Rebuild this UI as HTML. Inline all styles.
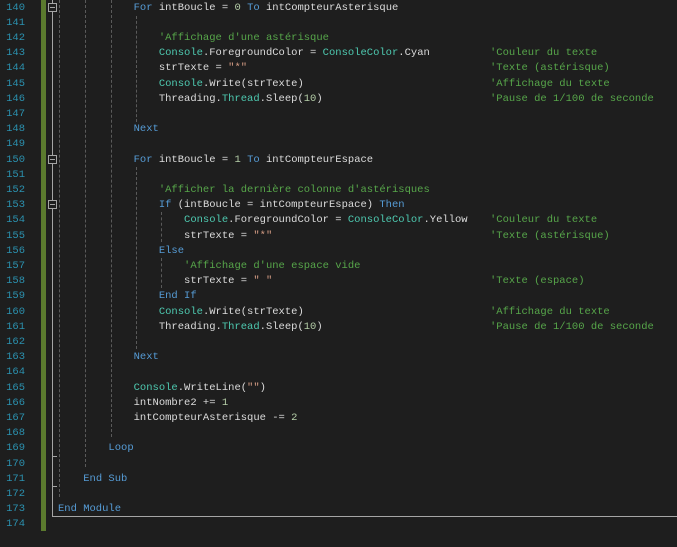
<!DOCTYPE html>
<html><head><meta charset="utf-8"><style>
html,body{margin:0;padding:0;background:#1e1e1e;width:677px;height:547px;overflow:hidden;position:relative}
.num,.code{position:absolute;top:0.5px;font-family:"Liberation Mono",monospace;font-size:10.5px;line-height:15.2px;white-space:pre;margin:0}
.num{left:0;width:25px;text-align:right;color:#2b91af}
.code{left:58px;color:#dcdcdc}
.k{color:#569cd6}.t{color:#4ec9b0}.c{color:#57a64a}.s{color:#d69d85}.n{color:#b5cea8}
.cm{position:absolute;left:432px}
.bar{position:absolute;left:41px;top:0;width:5px;height:531px;background:#5b7a2e}
.fl{position:absolute;left:52px;width:1px;background:#a5a5a5}
.box{position:absolute;left:48px;width:7px;height:7px;border:1px solid #a5a5a5;background:#1e1e1e}
.box:after{content:"";position:absolute;left:1px;top:3px;width:5px;height:1px;background:#a5a5a5}
.g{position:absolute;width:0;border-left:1px dashed #5a5a5a}
.tick{position:absolute;left:52px;width:5px;height:1px;background:#a5a5a5}
</style></head><body>
<div class="bar"></div>
<div class="fl" style="top:0;height:516px"></div>
<div style="position:absolute;left:52px;top:516px;width:625px;height:1px;background:#a5a5a5"></div>
<div class="tick" style="top:456px"></div>
<div class="tick" style="top:486px"></div>
<div class="box" style="top:3px"></div>
<div class="box" style="top:155px"></div>
<div class="box" style="top:200px"></div>
<div class="g" style="left:59px;top:0;height:497px"></div>
<div class="g" style="left:85px;top:0;height:467px"></div>
<div class="g" style="left:111px;top:0;height:437px"></div>
<div class="g" style="left:136px;top:16px;height:106px"></div>
<div class="g" style="left:136px;top:167px;height:182px"></div>
<div class="g" style="left:161px;top:212px;height:30px"></div>
<div class="g" style="left:161px;top:258px;height:30px"></div>
<pre class="num">140
141
142
143
144
145
146
147
148
149
150
151
152
153
154
155
156
157
158
159
160
161
162
163
164
165
166
167
168
169
170
171
172
173
174</pre>
<pre class="code">            <span class="k">For</span> intBoucle = <span class="n">0</span> <span class="k">To</span> intCompteurAsterisque

                <span class="c">'Affichage d'une astérisque</span>
                <span class="t">Console</span>.ForegroundColor = <span class="t">ConsoleColor</span>.Cyan<span class="cm c">'Couleur du texte</span>
                strTexte = <span class="s">"*"</span><span class="cm c">'Texte (astérisque)</span>
                <span class="t">Console</span>.Write(strTexte)<span class="cm c">'Affichage du texte</span>
                Threading.<span class="t">Thread</span>.Sleep(<span class="n">10</span>)<span class="cm c">'Pause de 1/100 de seconde</span>

            <span class="k">Next</span>

            <span class="k">For</span> intBoucle = <span class="n">1</span> <span class="k">To</span> intCompteurEspace

                <span class="c">'Afficher la dernière colonne d'astérisques</span>
                <span class="k">If</span> (intBoucle = intCompteurEspace) <span class="k">Then</span>
                    <span class="t">Console</span>.ForegroundColor = <span class="t">ConsoleColor</span>.Yellow<span class="cm c">'Couleur du texte</span>
                    strTexte = <span class="s">"*"</span><span class="cm c">'Texte (astérisque)</span>
                <span class="k">Else</span>
                    <span class="c">'Affichage d'une espace vide</span>
                    strTexte = <span class="s">" "</span><span class="cm c">'Texte (espace)</span>
                <span class="k">End If</span>
                <span class="t">Console</span>.Write(strTexte)<span class="cm c">'Affichage du texte</span>
                Threading.<span class="t">Thread</span>.Sleep(<span class="n">10</span>)<span class="cm c">'Pause de 1/100 de seconde</span>

            <span class="k">Next</span>

            <span class="t">Console</span>.WriteLine(<span class="s">""</span>)
            intNombre2 += <span class="n">1</span>
            intCompteurAsterisque -= <span class="n">2</span>

        <span class="k">Loop</span>

    <span class="k">End Sub</span>

<span class="k">End Module</span>
</pre>
</body></html>
